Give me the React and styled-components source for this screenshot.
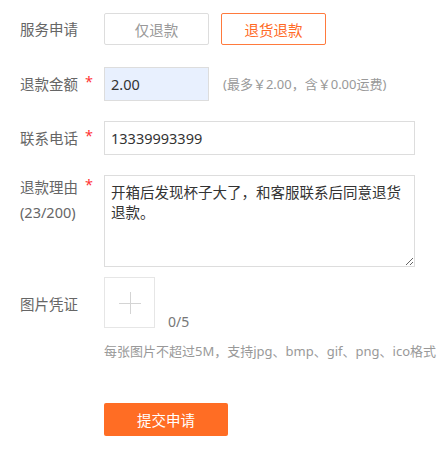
import React, { useState } from "react";
import styled, { createGlobalStyle } from "styled-components";

const GlobalStyle = createGlobalStyle`
  body {
    margin: 0;
    background: #fff;
    font-family: "Noto Sans", "Noto Sans CJK SC", sans-serif;
  }
`;

const Form = styled.div`
  padding: 13px 0 0 20px;
  width: 423px;
  box-sizing: border-box;
`;

const Row = styled.div`
  display: flex;
  align-items: flex-start;
  margin-top: ${(p) => p.gap || 0}px;
`;

const Label = styled.div`
  width: 84px;
  flex-shrink: 0;
  font-size: 14.5px;
  color: #666;
  line-height: ${(p) => p.lh || 20}px;
  padding-top: ${(p) => p.pt || 0}px;
`;

const Star = styled.span`
  color: #f33;
  margin-left: 7px;
  position: relative;
  top: -3px;
`;

const TypeBtn = styled.button`
  width: 105px;
  height: 32px;
  margin-right: 12px;
  background: #fff;
  border: 1px solid ${(p) => (p.active ? "#ff7a3d" : "#ddd")};
  border-radius: 2px;
  color: ${(p) => (p.active ? "#ff6a26" : "#999")};
  font-family: inherit;
  font-size: 14.5px;
  cursor: pointer;
  padding: 0;
`;

const TextInput = styled.input`
  width: ${(p) => p.w}px;
  height: 34px;
  box-sizing: border-box;
  border: 1px solid #ddd;
  background: ${(p) => (p.filled ? "#e8f0fe" : "#fff")};
  padding: 0 6px;
  font-family: inherit;
  font-size: 14.5px;
  color: #333;
  outline: none;
`;

const Hint = styled.span`
  margin-left: 14px;
  font-size: 13px;
  color: #999;
  line-height: 34px;
`;

const Reason = styled.textarea`
  width: 311px;
  height: 92px;
  box-sizing: border-box;
  border: 1px solid #ddd;
  padding: 6px 6px;
  font-family: inherit;
  font-size: 14.5px;
  line-height: 20px;
  color: #333;
  outline: none;
`;

const UploadCol = styled.div`
  display: flex;
  flex-direction: column;
`;

const UploadLine = styled.div`
  display: flex;
  align-items: flex-start;
`;

const UploadBox = styled.div`
  position: relative;
  width: 51px;
  height: 51px;
  box-sizing: border-box;
  border: 1px solid #e6e6e6;
  cursor: pointer;
  &::before,
  &::after {
    content: "";
    position: absolute;
    background: #d4d4d4;
  }
  &::before {
    left: 14px;
    top: 25px;
    width: 22px;
    height: 1px;
  }
  &::after {
    left: 25px;
    top: 14px;
    width: 1px;
    height: 22px;
  }
`;

const Count = styled.span`
  margin-left: 13px;
  padding-top: 35px;
  font-size: 14px;
  line-height: 20px;
  color: #777;
`;

const UploadTip = styled.div`
  margin-top: 10px;
  font-size: 13px;
  line-height: 18px;
  color: #999;
  white-space: nowrap;
`;

const Submit = styled.button`
  margin-left: 84px;
  width: 124px;
  height: 33px;
  border: none;
  border-radius: 2px;
  background: #ff6d24;
  color: #fff;
  font-family: inherit;
  font-size: 14.5px;
  cursor: pointer;
`;

const App = () => {
  const [type, setType] = useState("return");
  const [reason, setReason] = useState(
    "开箱后发现杯子大了，和客服联系后同意退货退款。"
  );

  return (
    <>
      <GlobalStyle />
      <Form>
        <Row>
          <Label lh={32}>服务申请</Label>
          <TypeBtn active={type === "refund"} onClick={() => setType("refund")}>
            仅退款
          </TypeBtn>
          <TypeBtn active={type === "return"} onClick={() => setType("return")}>
            退货退款
          </TypeBtn>
        </Row>

        <Row gap={22}>
          <Label lh={34}>
            退款金额<Star>*</Star>
          </Label>
          <TextInput w={105} filled defaultValue="2.00" />
          <Hint>(最多￥2.00，含￥0.00运费)</Hint>
        </Row>

        <Row gap={20}>
          <Label lh={34}>
            联系电话<Star>*</Star>
          </Label>
          <TextInput w={311} defaultValue="13339993399" />
        </Row>

        <Row gap={20}>
          <Label lh={25}>
            退款理由<Star>*</Star>
            <br />({reason.length}/200)
          </Label>
          <Reason value={reason} onChange={(e) => setReason(e.target.value)} />
        </Row>

        <Row gap={10}>
          <Label pt={17}>图片凭证</Label>
          <UploadCol>
            <UploadLine>
              <UploadBox />
              <Count>0/5</Count>
            </UploadLine>
            <UploadTip>每张图片不超过5M，支持jpg、bmp、gif、png、ico格式</UploadTip>
          </UploadCol>
        </Row>

        <Row gap={43}>
          <Submit>提交申请</Submit>
        </Row>
      </Form>
    </>
  );
};

export default App;
